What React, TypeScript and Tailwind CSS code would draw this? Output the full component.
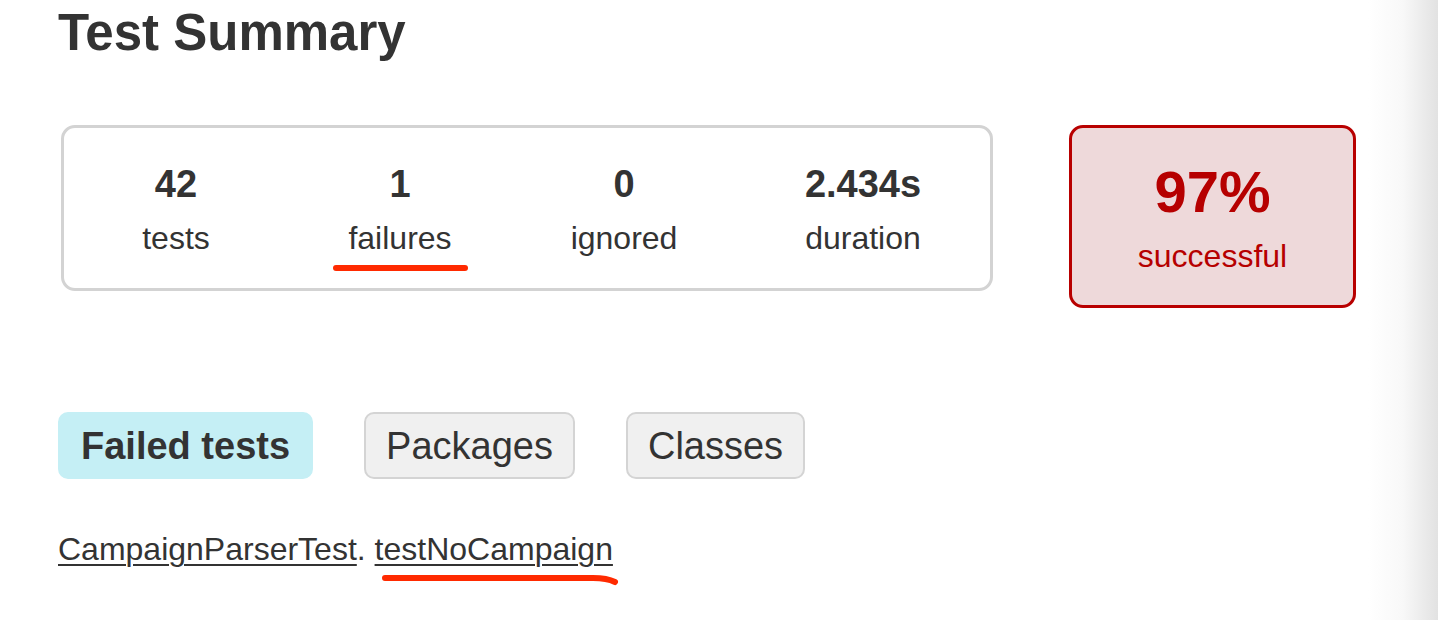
import React from 'react';

const stats = [
  { value: '42', label: 'tests' },
  { value: '1', label: 'failures', marked: true },
  { value: '0', label: 'ignored' },
  { value: '2.434s', label: 'duration' },
];

const tabs = [
  { label: 'Failed tests', active: true },
  { label: 'Packages' },
  { label: 'Classes' },
];

export default function App() {
  return (
    <div
      className="flex h-[620px] w-[1438px] overflow-hidden bg-white text-[#333]"
      style={{ fontFamily: '"Liberation Sans", Arial, sans-serif' }}
    >
      <main className="flex-1 pl-[58px]">
        <h1 className="mt-[5px] text-[51px] font-bold leading-[56px]">Test Summary</h1>

        <div className="mt-[64px] flex items-start">
          {/* counters */}
          <div className="ml-[3px] grid w-[932px] grid-cols-[224px_224px_224px_1fr] rounded-[14px] border-[3px] border-[#d3d3d3] pt-[34px] pb-[30px]">
            {stats.map((s) => (
              <div key={s.label} className="relative flex flex-col items-center">
                <div className="text-[38px] font-bold leading-[44px]">{s.value}</div>
                <div className="mt-[12px] text-[32px] leading-[40px]">{s.label}</div>
                {s.marked && (
                  <span className="absolute left-[45px] top-[103px] h-[6px] w-[135px] rounded-full bg-[#ff2a00]" />
                )}
              </div>
            ))}
          </div>

          {/* success rate */}
          <div className="ml-[76px] flex w-[287px] flex-col items-center rounded-[14px] border-[3px] border-[#b80000] bg-[#eed9da] pt-[32px] pb-[29px] text-[#b60000]">
            <div className="text-[58px] font-bold leading-[64px]">97%</div>
            <div className="mt-[12px] text-[32px] leading-[40px]">successful</div>
          </div>
        </div>

        <div className="mt-[104px] flex gap-[51px]">
          {tabs.map((t) => (
            <div
              key={t.label}
              className={`flex h-[67px] items-center rounded-[10px] border-2 pt-[2px] text-[38px] ${
                t.active
                  ? 'border-[#c5eff5] bg-[#c5eff5] px-[21px] font-bold'
                  : 'border-[#d4d4d4] bg-[#f0f0f0] px-[20px]'
              }`}
            >
              {t.label}
            </div>
          ))}
        </div>

        <div className="relative mt-[50px] text-[32px] leading-[40px]">
          <a href="#" className="underline decoration-[2px] underline-offset-[4px]">CampaignParserTest</a>
          <span>. </span>
          <a href="#" className="underline decoration-[2px] underline-offset-[4px]">testNoCampaign</a>
          <svg className="absolute left-[323px] top-[44px]" width="240" height="16" viewBox="0 0 240 16">
            <path
              d="M4 5 L212 5 C222 5 228 6 234 9"
              fill="none"
              stroke="#ff2a00"
              strokeWidth="6"
              strokeLinecap="round"
            />
          </svg>
        </div>
      </main>

      <div className="h-full w-[70px] bg-gradient-to-r from-white via-[#f8f8f8] to-[#e2e2e2]" />
    </div>
  );
}
